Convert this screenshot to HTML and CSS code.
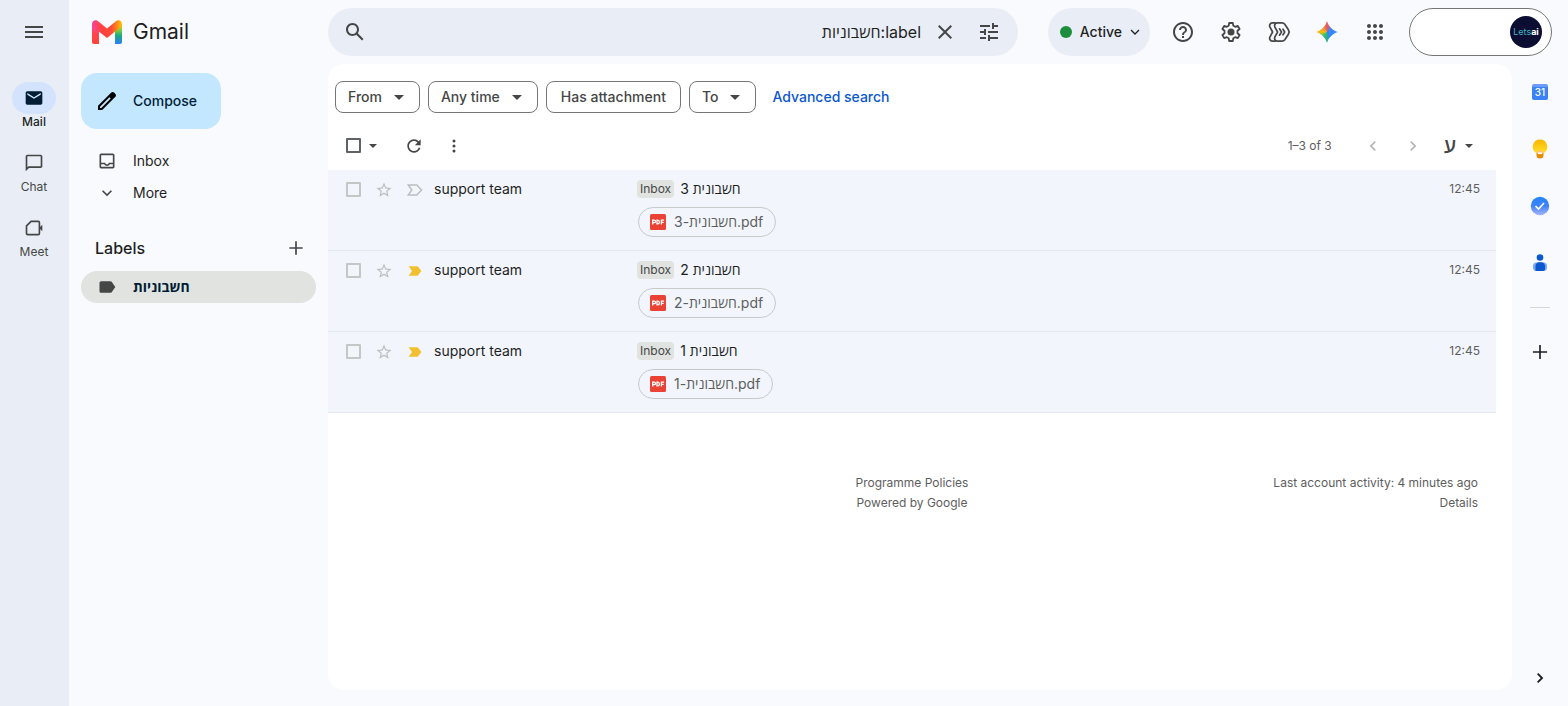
FILE: index.html
```html
<!DOCTYPE html>
<html lang="en">
<head>
  <meta charset="UTF-8">
  <meta name="viewport" content="width=device-width, initial-scale=1.0">
  <title>Gmail</title>
  <link rel="stylesheet" href="styles.css">
</head>
<body>

<!-- Shared icons -->
<svg class="sprite" aria-hidden="true">
  <symbol id="i-caret" viewBox="0 0 10 5"><path d="M0 0h10L5 5z"/></symbol>
  <symbol id="i-star" viewBox="0 0 24 24"><path d="M22 9.240l-7.190-.62L12 2 9.190 8.630 2 9.240l5.460 4.730L5.820 21 12 17.270 18.180 21l-1.630-7.030L22 9.240zM12 15.400l-3.760 2.270 1-4.280-3.320-2.880 4.380-.38L12 6.100l1.710 4.040 4.380.38-3.320 2.880 1 4.280L12 15.400z"/></symbol>
  <symbol id="i-marker" viewBox="0 0 16 12"><path d="M1.200 1h8.600L14.600 6l-4.800 5H1.200l3.600-5z" fill="none" stroke="currentColor" stroke-width="1.500"/></symbol>
  <symbol id="i-marker-on" viewBox="0 0 16 12"><path d="M1.600 1.200h8.200c.6 0 1 .2 1.300.6L14.400 6l-3.300 4.200c-.3.400-.7.600-1.300.6H1.600L5 6z"/></symbol>
  <symbol id="i-pdf" viewBox="0 0 16 16"><rect width="16" height="16" rx="1.500" fill="#ea4335"/><g fill="none" stroke="#fff" stroke-width="1.300"><path d="M2.700 10.500V6.100h1.500a1.300 1.300 0 0 1 0 2.600H2.700M7 6.100v3.800h.8c2.100 0 2.100-3.800 0-3.800zM11.400 10.500V6.100h2.700M11.400 8.300h2.300"/></g></symbol>
</svg>

<div class="app">

  <!-- Left rail -->
  <nav class="rail" aria-label="Apps">
    <button class="icon-btn menu-btn" aria-label="Main menu">
      <svg width="24" height="24" viewBox="0 0 24 24"><path d="M3 18h18v-2H3v2zm0-5h18v-2H3v2zm0-7v2h18V6H3z"/></svg>
    </button>
    <a class="rail-item active" href="#">
      <span class="rail-icon"><svg width="20" height="20" viewBox="0 0 24 24"><path d="M20 4H4c-1.100 0-2 .9-2 2v12c0 1.100.9 2 2 2h16c1.100 0 2-.9 2-2V6c0-1.100-.9-2-2-2zm0 4-8 5-8-5V6l8 5 8-5v2z"/></svg></span>
      Mail
    </a>
    <a class="rail-item" href="#">
      <span class="rail-icon"><svg width="20" height="20" viewBox="0 0 24 24"><path d="M20 2H4c-1.100 0-2 .9-2 2v18l4-4h14c1.100 0 2-.9 2-2V4c0-1.100-.9-2-2-2zm0 14H5.200L4 17.200V4h16v12z"/></svg></span>
      Chat
    </a>
    <a class="rail-item" href="#">
      <span class="rail-icon"><svg width="20" height="20" viewBox="0 0 24 24"><path d="M8.500 4H17a1.500 1.500 0 0 1 1.500 1.500v13A1.500 1.500 0 0 1 17 20H4.500A1.500 1.500 0 0 1 3 18.500v-9z" fill="none" stroke="currentColor" stroke-width="2"/><path d="M18 12l4-4v8z"/></svg></span>
      Meet
    </a>
  </nav>

  <!-- Labels sidebar -->
  <aside class="sidebar">
    <a class="logo" href="#">
      <svg width="32" height="24" viewBox="0 0 32 24">
        <defs>
          <linearGradient id="g-left" x1="0" y1="0" x2="0" y2="1"><stop offset="0" stop-color="#f349b8"/><stop offset=".5" stop-color="#ff4650"/><stop offset="1" stop-color="#ff4338"/></linearGradient>
          <linearGradient id="g-mid" x1="0" y1="0" x2="1" y2="0"><stop offset="0" stop-color="#f64498"/><stop offset=".3" stop-color="#ff4140"/><stop offset=".65" stop-color="#ff4a35"/><stop offset="1" stop-color="#ffc400"/></linearGradient>
          <linearGradient id="g-right" x1="0" y1="0" x2="0" y2="1"><stop offset="0" stop-color="#ffc400"/><stop offset=".3" stop-color="#7fce3c"/><stop offset=".6" stop-color="#18aa82"/><stop offset="1" stop-color="#2c7dff"/></linearGradient>
        </defs>
        <path d="M1 4h7v20H3a2 2 0 0 1-2-2z" fill="url(#g-left)"/>
        <path d="M24 4h7v18a2 2 0 0 1-2 2h-5z" fill="url(#g-right)"/>
        <path d="M1 4C1 .5 4.800-.8 7.400 1.400L16 8.400l8.600-7C27.200-.8 31 .5 31 4c0 1.600-.6 2.600-1.800 3.600L16 18 2.800 7.600C1.600 6.600 1 5.600 1 4z" fill="url(#g-mid)"/>
      </svg>
      <span>Gmail</span>
    </a>
    <button class="compose">
      <svg width="24" height="24" viewBox="0 0 24 24"><path d="M20.400 4.900l-1.300-1.300c-.8-.8-2-.8-2.800 0L3 16.800V21h4.200L20.400 7.700c.8-.8.8-2 0-2.800zM6.300 19H5v-1.300l9.400-9.400 1.300 1.300z"/></svg>
      Compose
    </button>
    <a class="side-item" href="#">
      <svg width="20" height="20" viewBox="0 0 24 24"><path d="M19 3H5c-1.100 0-2 .9-2 2v14c0 1.100.9 2 2 2h14c1.100 0 2-.9 2-2V5c0-1.100-.9-2-2-2zm0 16H5v-3h3.600c.7 1.200 2 2 3.400 2s2.700-.8 3.500-2H19v3zm0-5h-5c0 1.100-.9 2-2 2s-2-.9-2-2H5V5h14v9z"/></svg>
      Inbox
    </a>
    <a class="side-item" href="#">
      <svg width="20" height="20" viewBox="0 0 24 24"><path d="M16.600 8.600L12 13.200 7.400 8.600 6 10l6 6 6-6z"/></svg>
      More
    </a>
    <div class="labels-head">
      <h2>Labels</h2>
      <button class="icon-btn" aria-label="Create new label">
        <svg width="20" height="20" viewBox="0 0 24 24"><path d="M20 13h-7v7h-2v-7H4v-2h7V4h2v7h7v2z"/></svg>
      </button>
    </div>
    <a class="side-item selected" href="#">
      <svg width="20" height="20" viewBox="0 0 24 24"><path d="M17.600 5.800C17.300 5.300 16.700 5 16 5L5 5c-1.100 0-2 .9-2 2v10c0 1.100.9 2 2 2h11c.7 0 1.300-.3 1.600-.8L22 12z"/></svg>
      חשבוניות
    </a>
  </aside>

  <div class="content">
    <!-- Top bar -->
    <header class="topbar">
      <form class="search">
        <button class="icon-btn" type="button" aria-label="Search">
          <svg width="24" height="24" viewBox="0 0 24 24"><path d="M20.500 19l-5.700-5.700C15.500 12.300 16 11 16 9.500 16 5.900 13.100 3 9.500 3S3 5.900 3 9.500 5.900 16 9.500 16c1.500 0 2.800-.5 3.800-1.200l5.700 5.700 1.500-1.500zM5 9.500C5 7 7 5 9.500 5S14 7 14 9.500 12 14 9.500 14 5 12 5 9.500z"/></svg>
        </button>
        <input type="text" dir="rtl" value="label:חשבוניות" aria-label="Search in mail">
        <button class="icon-btn" type="button" aria-label="Clear search">
          <svg width="24" height="24" viewBox="0 0 24 24"><path d="M19 6.400L17.600 5 12 10.600 6.400 5 5 6.400l5.600 5.600L5 17.600 6.400 19l5.600-5.600 5.600 5.600 1.400-1.400-5.600-5.600z"/></svg>
        </button>
        <button class="icon-btn" type="button" aria-label="Advanced search options">
          <svg width="24" height="24" viewBox="0 0 24 24"><path d="M3 17v2h6v-2H3zM3 5v2h10V5H3zm10 16v-2h8v-2h-8v-2h-2v6h2zM7 9v2H3v2h4v2h2V9H7zm14 4v-2H11v2h10zm-6-4h2V7h4V5h-4V3h-2v6z"/></svg>
        </button>
      </form>
      <div class="tools">
        <button class="status">
          <span class="dot"></span>
          Active
          <svg width="10" height="6" viewBox="0 0 10 6"><path d="M1 1l4 4 4-4" fill="none" stroke="currentColor" stroke-width="1.300"/></svg>
        </button>
        <div class="tool-icons">
          <button class="icon-btn" aria-label="Support">
            <svg width="24" height="24" viewBox="0 0 24 24"><path d="M11 18h2v-2h-2v2zm1-16C6.500 2 2 6.500 2 12s4.500 10 10 10 10-4.500 10-10S17.500 2 12 2zm0 18c-4.400 0-8-3.600-8-8s3.600-8 8-8 8 3.600 8 8-3.600 8-8 8zm0-14c-2.200 0-4 1.800-4 4h2c0-1.100.9-2 2-2s2 .9 2 2c0 2-3 1.750-3 5h2c0-2.250 3-2.500 3-5 0-2.200-1.800-4-4-4z"/></svg>
          </button>
          <button class="icon-btn" aria-label="Settings">
            <svg width="24" height="24" viewBox="0 0 24 24"><path d="M10.200 3h3.600l.5 2.700 1.900 1.100 2.600-.9 1.800 3.100-2.100 1.800v2.400l2.100 1.800-1.800 3.100-2.600-.9-1.900 1.100-.5 2.700h-3.600l-.5-2.700-1.900-1.100-2.600.9L3.400 15l2.100-1.800v-2.400L3.400 9l1.800-3.100 2.600.9 1.900-1.100z" fill="none" stroke="currentColor" stroke-width="1.800" stroke-linejoin="round"/><circle cx="12" cy="12" r="3.500"/></svg>
          </button>
          <button class="icon-btn" aria-label="Workspace Studio">
            <svg width="24" height="24" viewBox="0 0 24 24"><g fill="none" stroke="currentColor" stroke-width="1.700" stroke-linejoin="round" stroke-linecap="round"><path d="M10.500 2.900H15c1.200 0 2.100.5 2.800 1.400l3.600 5.500c1 1.500 1 2.900 0 4.400l-3.600 5.500c-.7.9-1.600 1.400-2.800 1.400h-4.500c-2.300 0-3.700-2.300-2.600-4.300l2.700-4.800-2.700-4.800c-1.100-2 .3-4.300 2.600-4.300z"/><path d="M8.500 2.900H5.600C3.300 2.900 1.900 5.200 3 7.200L5.600 12 3 16.800c-1.100 2 .3 4.300 2.600 4.300h2.900"/><path d="M12.500 8.800l2 3.200-2 3.200M16 9.200l1.700 2.800-1.700 2.800"/></g></svg>
          </button>
          <button class="icon-btn" aria-label="Ask Gemini">
            <span class="gemini"></span>
          </button>
          <button class="icon-btn" aria-label="Google apps">
            <svg width="24" height="24" viewBox="0 0 24 24"><path d="M6 8c1.100 0 2-.9 2-2s-.9-2-2-2-2 .9-2 2 .9 2 2 2zm6 12c1.100 0 2-.9 2-2s-.9-2-2-2-2 .9-2 2 .9 2 2 2zm-6 0c1.100 0 2-.9 2-2s-.9-2-2-2-2 .9-2 2 .9 2 2 2zm0-6c1.100 0 2-.9 2-2s-.9-2-2-2-2 .9-2 2 .9 2 2 2zm6 0c1.100 0 2-.9 2-2s-.9-2-2-2-2 .9-2 2 .9 2 2 2zm4-8c0 1.100.9 2 2 2s2-.9 2-2-.9-2-2-2-2 .9-2 2zm-4 2c1.100 0 2-.9 2-2s-.9-2-2-2-2 .9-2 2 .9 2 2 2zm6 6c1.100 0 2-.9 2-2s-.9-2-2-2-2 .9-2 2 .9 2 2 2zm0 6c1.100 0 2-.9 2-2s-.9-2-2-2-2 .9-2 2 .9 2 2 2z"/></svg>
          </button>
        </div>
        <button class="account">
          <span class="avatar">Lets<b>ai</b></span>
        </button>
      </div>
    </header>

    <div class="workspace">
      <main class="panel">
        <!-- Search filters -->
        <div class="filters">
          <button class="chip">From <svg width="10" height="5"><use href="#i-caret"/></svg></button>
          <button class="chip">Any time <svg width="10" height="5"><use href="#i-caret"/></svg></button>
          <button class="chip plain">Has attachment</button>
          <button class="chip">To <svg width="10" height="5"><use href="#i-caret"/></svg></button>
          <a class="advanced" href="#">Advanced search</a>
        </div>

        <!-- List toolbar -->
        <div class="toolbar">
          <input class="check dark" type="checkbox" aria-label="Select all">
          <button class="icon-btn select-more" aria-label="Select options"><svg width="8" height="4"><use href="#i-caret"/></svg></button>
          <button class="icon-btn" aria-label="Refresh">
            <svg width="20" height="20" viewBox="0 0 24 24"><path d="M17.600 6.400C16.200 4.900 14.200 4 12 4c-4.400 0-8 3.600-8 8s3.600 8 8 8c3.700 0 6.800-2.600 7.700-6h-2.100c-.8 2.300-3 4-5.600 4-3.300 0-6-2.700-6-6s2.700-6 6-6c1.700 0 3.100.7 4.200 1.800L13 11h7V4z"/></svg>
          </button>
          <button class="icon-btn" aria-label="More options">
            <svg width="20" height="20" viewBox="0 0 24 24"><circle cx="12" cy="6" r="1.800"/><circle cx="12" cy="12" r="1.800"/><circle cx="12" cy="18" r="1.800"/></svg>
          </button>
          <span class="count">1–3 of 3</span>
          <button class="icon-btn faded" aria-label="Newer">
            <svg width="20" height="20" viewBox="0 0 24 24"><path d="M15.400 7.400L14 6l-6 6 6 6 1.400-1.400-4.600-4.600z"/></svg>
          </button>
          <button class="icon-btn faded" aria-label="Older">
            <svg width="20" height="20" viewBox="0 0 24 24"><path d="M8.600 16.600L13.200 12 8.600 7.400 10 6l6 6-6 6z"/></svg>
          </button>
          <button class="input-tool" aria-label="Input tools">
            <span>ע</span>
            <svg width="8" height="4"><use href="#i-caret"/></svg>
          </button>
        </div>

        <!-- Messages -->
        <table class="mails">
          <tbody>
            <tr>
              <td class="col-actions"><div class="actions">
                <input class="check" type="checkbox" aria-label="Select חשבונית 3">
                <button class="icon-btn" aria-label="Star"><svg width="18" height="18"><use href="#i-star"/></svg></button>
                <button class="icon-btn" aria-label="Not important"><svg width="16" height="12"><use href="#i-marker"/></svg></button>
              </div></td>
              <td class="col-sender">support team</td>
              <td class="col-subject">
                <div class="subject"><span class="tag">Inbox</span>חשבונית 3</div>
                <button class="file"><svg width="16" height="16"><use href="#i-pdf"/></svg>חשבונית-3.pdf</button>
              </td>
              <td class="col-time">12:45</td>
            </tr>
            <tr>
              <td class="col-actions"><div class="actions">
                <input class="check" type="checkbox" aria-label="Select חשבונית 2">
                <button class="icon-btn" aria-label="Star"><svg width="18" height="18"><use href="#i-star"/></svg></button>
                <button class="icon-btn important" aria-label="Important"><svg width="16" height="12"><use href="#i-marker-on"/></svg></button>
              </div></td>
              <td class="col-sender">support team</td>
              <td class="col-subject">
                <div class="subject"><span class="tag">Inbox</span>חשבונית 2</div>
                <button class="file"><svg width="16" height="16"><use href="#i-pdf"/></svg>חשבונית-2.pdf</button>
              </td>
              <td class="col-time">12:45</td>
            </tr>
            <tr>
              <td class="col-actions"><div class="actions">
                <input class="check" type="checkbox" aria-label="Select חשבונית 1">
                <button class="icon-btn" aria-label="Star"><svg width="18" height="18"><use href="#i-star"/></svg></button>
                <button class="icon-btn important" aria-label="Important"><svg width="16" height="12"><use href="#i-marker-on"/></svg></button>
              </div></td>
              <td class="col-sender">support team</td>
              <td class="col-subject">
                <div class="subject"><span class="tag">Inbox</span>חשבונית 1</div>
                <button class="file"><svg width="16" height="16"><use href="#i-pdf"/></svg>חשבונית-1.pdf</button>
              </td>
              <td class="col-time">12:45</td>
            </tr>
          </tbody>
        </table>

        <footer class="footer">
          <div class="policies">
            <a href="#">Programme Policies</a>
            <a href="#">Powered by Google</a>
          </div>
          <div class="activity">
            <span>Last account activity: 4 minutes ago</span>
            <a href="#">Details</a>
          </div>
        </footer>
      </main>

      <!-- Side panel -->
      <aside class="addons">
        <button class="icon-btn" aria-label="Calendar"><span class="calendar">31</span></button>
        <button class="icon-btn" aria-label="Keep">
          <svg width="20" height="20" viewBox="0 0 20 20">
            <defs><linearGradient id="g-keep" x1="0" y1="0" x2="0" y2="1"><stop offset="0" stop-color="#f9b500"/><stop offset="1" stop-color="#ffe02e"/></linearGradient></defs>
            <path d="M6.500 13h7v3a3.500 3.500 0 0 1-7 0z" fill="#e58a00"/>
            <path d="M10 .5a7.300 7.300 0 0 0-4 13.400c.3.200.6.300 1 .3h6c.4 0 .7-.1 1-.3A7.300 7.300 0 0 0 10 .5z" fill="url(#g-keep)"/>
            <path d="M6.800 14.200a3.300 3.300 0 0 1 6.400 0z" fill="#ffb8a0"/>
            <path d="M8 13.500h4v1.600H8z" fill="#fff"/>
          </svg>
        </button>
        <button class="icon-btn" aria-label="Tasks">
          <svg width="20" height="20" viewBox="0 0 20 20">
            <defs><linearGradient id="g-tasks" x1="0" y1="0" x2="0" y2="1"><stop offset="0" stop-color="#2684fc"/><stop offset=".5" stop-color="#3f83f8"/><stop offset="1" stop-color="#a9b4fb"/></linearGradient></defs>
            <circle cx="10" cy="10" r="9.200" fill="url(#g-tasks)"/>
            <path d="M5.500 10l3 3 5.500-6" fill="none" stroke="#fff" stroke-width="1.600"/>
          </svg>
        </button>
        <button class="icon-btn" aria-label="Contacts">
          <svg width="20" height="20" viewBox="0 0 20 20">
            <circle cx="10" cy="4.500" r="3.300" fill="#0b57d0"/>
            <rect x="3" y="9.500" width="14" height="8.500" rx="3.500" fill="#7ba7f7"/>
            <path d="M5.500 13A3.500 3.500 0 0 1 9 9.300h2.500A3.500 3.500 0 0 1 15 13v3c0 1.200-.8 2-2 2H5.500z" fill="#0b57d0"/>
          </svg>
        </button>
        <hr>
        <button class="icon-btn" aria-label="Get add-ons">
          <svg width="20" height="20" viewBox="0 0 24 24"><path d="M20.500 13H13v7.500h-2V13H3.500v-2H11V3.500h2V11h7.500z"/></svg>
        </button>
        <button class="icon-btn collapse" aria-label="Hide side panel">
          <svg width="20" height="20" viewBox="0 0 24 24"><path d="M8.400 16.400l4.400-4.400-4.400-4.400L10 6l6 6-6 6z"/></svg>
        </button>
      </aside>
    </div>
  </div>
</div>

</body>
</html>
```
FILE: styles.css
```css
* {
  box-sizing: border-box;
}
body {
  margin: 0;
  font-family: Inter, "Open Sans", "Liberation Sans", sans-serif;
  font-size: 14px;
  line-height: 20px;
  color: #1f1f1f;
  background-color: #f8fafd;
}
a {
  color: inherit;
  text-decoration: none;
}
button,
input {
  font: inherit;
  color: inherit;
}
button {
  padding: 0;
  border: none;
  background: none;
  cursor: pointer;
}
svg {
  display: block;
  flex: none;
  fill: currentColor;
}
.sprite {
  position: absolute;
  width: 0;
  height: 0;
}
.icon-btn {
  display: flex;
  align-items: center;
  justify-content: center;
  flex: none;
  width: 40px;
  height: 40px;
  color: #444746;
}
.app {
  display: flex;
  min-height: 100vh;
}

/* Left rail */
.rail {
  display: flex;
  flex-direction: column;
  align-items: center;
  flex: none;
  width: 69px;
  padding: 12px 1px 0 0;
  background-color: #e9eef6;
}
.menu-btn {
  margin-bottom: 30px;
}
.rail-item {
  display: flex;
  flex-direction: column;
  align-items: center;
  height: 65px;
  font-size: 12px;
  line-height: 16px;
  color: #444746;
}
.rail-icon {
  display: flex;
  align-items: center;
  justify-content: center;
  width: 44px;
  height: 32px;
  border-radius: 16px;
}
.rail-item.active {
  font-weight: 500;
  color: #1f1f1f;
}
.active .rail-icon {
  color: #001d35;
  background-color: #d3e3fd;
}

/* Sidebar */
.sidebar {
  flex: none;
  width: 259px;
  padding: 0 12px;
}
.logo {
  display: flex;
  align-items: center;
  gap: 10px;
  height: 64px;
  padding-left: 10px;
  font-size: 21px;
}
.compose {
  display: flex;
  align-items: center;
  gap: 14px;
  height: 56px;
  margin: 9px 0 16px;
  padding: 0 24px 0 14px;
  border-radius: 16px;
  font-weight: 500;
  color: #001d35;
  background-color: #c2e7ff;
}
.compose svg {
  color: #000;
}
.side-item {
  display: flex;
  align-items: center;
  gap: 16px;
  height: 32px;
  padding-left: 16px;
  border-radius: 16px;
}
.side-item svg {
  color: #444746;
}
.side-item.selected {
  font-weight: 700;
  color: #001d35;
  background-color: #e1e3e1;
}
.labels-head {
  display: flex;
  align-items: center;
  justify-content: space-between;
  height: 40px;
  margin: 19px 0 3px;
  padding-left: 14px;
}
.labels-head h2 {
  margin: 0;
  font-size: 16px;
  font-weight: 500;
}

/* Top bar */
.content {
  display: flex;
  flex-direction: column;
  flex: 1;
  min-width: 0;
}
.topbar {
  display: flex;
  justify-content: space-between;
  padding: 8px 16px 8px 0;
}
.search {
  display: flex;
  align-items: center;
  flex: 0 1 690px;
  gap: 4px;
  height: 48px;
  padding: 0 9px 0 7px;
  border-radius: 24px;
  background-color: #e9eef6;
}
.search input {
  flex: 1;
  min-width: 0;
  padding: 0;
  border: none;
  outline: none;
  font-size: 16px;
  background: none;
}
.tools {
  display: flex;
  align-items: center;
}
.status {
  display: flex;
  align-items: center;
  gap: 8px;
  height: 48px;
  padding: 0 10px 0 12px;
  border-radius: 24px;
  font-weight: 500;
  background-color: #e9eef6;
}
.dot {
  width: 12px;
  height: 12px;
  border-radius: 50%;
  background-color: #1e8e3e;
}
.tool-icons {
  display: flex;
  gap: 8px;
  margin: 0 14px 0 13px;
}
.gemini {
  width: 22px;
  height: 22px;
  background: conic-gradient(#ea5a5a, #4285f4 50deg, #3186ff 150deg, #2bb673 190deg, #34c27b 220deg, #fbbc04 270deg, #f29a3c 310deg, #ea5a5a);
  clip-path: path("M11 0c1.200 5 6 9.800 11 11-5 1.200-9.800 6-11 11-1.200-5-6-9.800-11-11 5-1.200 9.800-6 11-11z");
}
.account {
  display: flex;
  align-items: center;
  justify-content: flex-end;
  width: 143px;
  height: 48px;
  padding-right: 9px;
  border: 1px solid #747775;
  border-radius: 24px;
  background-color: #fff;
}
.avatar {
  width: 32px;
  height: 32px;
  border-radius: 50%;
  font-size: 9px;
  line-height: 32px;
  text-align: center;
  color: #3fb5bd;
  background-color: #0b0d33;
}
.avatar b {
  color: #fff;
}

/* Mail panel */
.workspace {
  display: flex;
  flex: 1;
}
.panel {
  flex: 1;
  min-width: 0;
  margin-bottom: 16px;
  padding-right: 16px;
  border-radius: 16px;
  background-color: #fff;
}
.filters {
  display: flex;
  align-items: center;
  gap: 8px;
  padding: 17px 0 0 7px;
}
.chip {
  display: flex;
  align-items: center;
  gap: 12px;
  height: 32px;
  padding: 0 15px 0 12px;
  border: 1px solid #747775;
  border-radius: 8px;
  font-weight: 500;
  color: #444746;
}
.chip.plain {
  padding: 0 14px;
}
.advanced {
  margin-left: 8px;
  font-weight: 500;
  color: #0b57d0;
}
.toolbar {
  display: flex;
  align-items: center;
  height: 57px;
  padding: 8px 16px 0 18px;
}
.check {
  appearance: none;
  flex: none;
  width: 15px;
  height: 15px;
  margin: 0;
  border: 2px solid #c4c7c5;
  border-radius: 1px;
}
.check.dark {
  border-color: #5f6368;
}
.select-more {
  width: 24px;
  margin-right: 9px;
}
.count {
  margin-left: auto;
  margin-right: 21px;
  font-size: 12px;
  color: #5e5e5e;
}
.faded {
  color: #b4b6b5;
}
.input-tool {
  display: flex;
  align-items: center;
  gap: 9px;
  margin-left: 11px;
  padding-right: 7px;
  font-size: 20px;
  font-weight: 600;
  color: #444746;
}
.mails {
  width: 100%;
  border-spacing: 0;
  table-layout: fixed;
}
.mails tr {
  background-color: #f2f6fc;
}
.mails td {
  height: 81px;
  padding: 9px 0 0;
  border-bottom: 1px solid #e3e7ee;
  vertical-align: top;
}
.col-actions {
  width: 106px;
}
.col-sender {
  width: 203px;
}
.mails .col-time {
  width: 80px;
  padding-right: 16px;
  font-size: 12px;
  text-align: right;
  color: #5e5e5e;
}
.actions {
  display: flex;
  align-items: center;
  height: 21px;
  padding-left: 18px;
}
.actions .icon-btn {
  width: 31px;
  height: 20px;
  color: #bcbfbe;
}
.actions .check {
  margin-right: 7px;
}
.actions .important {
  color: #f2c02e;
}
.subject {
  display: flex;
  align-items: center;
  gap: 6px;
}
.tag {
  padding: 0 3px;
  border-radius: 4px;
  font-size: 12px;
  line-height: 18px;
  color: #444746;
  background-color: #e1e3e1;
}
.file {
  display: flex;
  align-items: center;
  gap: 8px;
  height: 30px;
  margin: 8px 0 0 1px;
  padding: 0 12px 0 11px;
  border: 1px solid #c7cac9;
  border-radius: 15px;
  color: #5e5e5e;
}
.footer {
  display: grid;
  grid-template-columns: 1fr 1fr 1fr;
  padding-top: 60px;
  font-size: 12px;
  color: #5e5e5e;
}
.policies,
.activity {
  display: flex;
  flex-direction: column;
}
.policies {
  grid-column: 2;
  align-items: center;
}
.activity {
  align-items: flex-end;
  padding-right: 18px;
  white-space: nowrap;
}

/* Side panel */
.addons {
  display: flex;
  flex-direction: column;
  align-items: center;
  flex: none;
  gap: 17px;
  width: 56px;
  padding: 8px 0;
}
.calendar {
  width: 16px;
  height: 16px;
  border-radius: 2px;
  font-size: 10px;
  font-weight: 500;
  line-height: 16px;
  color: #fff;
  background: linear-gradient(#6f9bf8 20%, #3b82f6 20%);
}
.addons hr {
  width: 20px;
  margin: 7px 0;
  border: none;
  border-top: 1px solid #d5d8dc;
}
.addons .collapse {
  margin-top: auto;
}
.addons .icon-btn {
  color: #1f1f1f;
}
```
